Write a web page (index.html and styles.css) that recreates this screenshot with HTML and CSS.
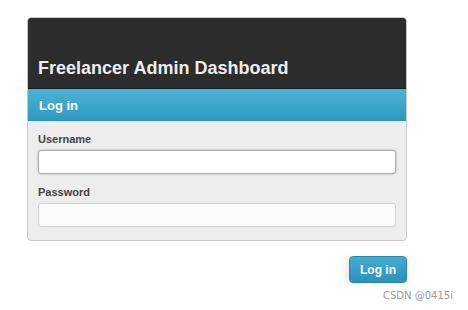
FILE: index.html
```html
<!DOCTYPE html>
<html lang="en">

<head>
    <meta charset="UTF-8">
    <title>Freelancer Admin Dashboard</title>
    <link rel="stylesheet" href="styles.css">
</head>

<body>
    <div class="wrap">
        <div class="box">
            <div class="top">
                <h1>Freelancer Admin Dashboard</h1>
            </div>
            <div class="bar">Log in</div>
            <form class="form">
                <label for="username">Username</label>
                <input type="text" id="username" class="focus">
                <label for="password">Password</label>
                <input type="password" id="password">
            </form>
        </div>
        <div class="actions">
            <button type="button" class="btn">Log in</button>
        </div>
    </div>
    <div class="mark">CSDN @0415i</div>
</body>

</html>
```

FILE: styles.css
```css
body {
    margin: 0;
    background: #fff;
    font-family: "Liberation Sans", Arial, sans-serif;
}

.wrap {
    width: 380px;
    margin-left: 27px;
    padding-top: 17px;
}

.box {
    border: 1px solid #c8c8c8;
    border-radius: 4px;
    overflow: hidden;
    background: #ededed;
}

.top {
    height: 71px;
    background: #2c2c2c;
    display: flex;
    align-items: flex-end;
    padding: 0 10px 9px;
    box-sizing: border-box;
    border-bottom: 1px solid #1b1b1b;
}

.top h1 {
    margin: 0;
    font-size: 18px;
    color: #eee;
}

.bar {
    height: 32px;
    line-height: 33px;
    padding-left: 11px;
    background: linear-gradient(#4cb2d5, #2f9ac2);
    color: #fff;
    font-size: 13px;
    font-weight: bold;
    border-bottom: 1px solid #2a8db5;
    box-sizing: border-box;
}

.form {
    display: flex;
    flex-direction: column;
    padding: 12px 10px 13px;
}

.form label {
    font-size: 11px;
    font-weight: bold;
    color: #444;
    margin-bottom: 5px;
}

.form input {
    height: 24px;
    border: 1px solid #d2d2d2;
    border-radius: 3px;
    background: #fafafa;
    box-sizing: border-box;
    margin-bottom: 12px;
}

.form input:last-child {
    margin-bottom: 0;
}

.form .focus {
    background: #fff;
    border-color: #a8a8a8;
    box-shadow: 0 0 3px rgba(0, 0, 0, 0.2);
}

.actions {
    display: flex;
    justify-content: flex-end;
    margin-top: 15px;
}

.btn {
    width: 58px;
    height: 27px;
    border: 1px solid #2585ab;
    border-radius: 4px;
    background: linear-gradient(#44acd2, #2c92bb);
    color: #fff;
    font-family: "Liberation Sans", Arial, sans-serif;
    font-size: 12px;
    font-weight: bold;
    box-shadow: -4px 2px 6px rgba(0, 0, 0, 0.08);
}

.mark {
    position: absolute;
    left: 383px;
    top: 290px;
    font-size: 10px;
    color: #999;
    font-family: "DejaVu Sans", sans-serif;
}
```
